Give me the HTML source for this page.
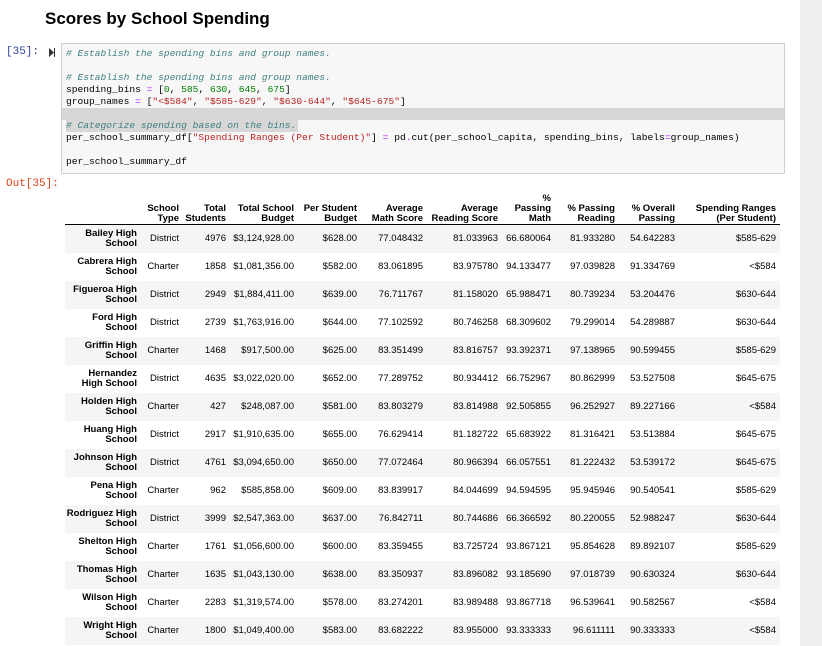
<!DOCTYPE html>
<html><head><meta charset="utf-8"><style>
body{margin:0;width:822px;height:646px;overflow:hidden;background:#fff;font-family:"Liberation Sans",Arial,sans-serif;position:relative}
.side{position:absolute;left:800px;top:0;width:22px;height:646px;background:#eeeeee}
h1{position:absolute;left:45px;top:9px;margin:0;font-size:17px;font-weight:bold;color:#000}
.pr{position:absolute;left:6px;top:46px;font:11px "Liberation Mono",monospace;color:#303F9F}
.out{position:absolute;left:6px;top:178px;font:11px "Liberation Mono",monospace;color:#D84315}
.run{position:absolute;left:49px;top:48px;width:6px;height:9px}
.code{position:absolute;left:61px;top:43px;width:722px;height:129px;background:#f7f7f7;border:1px solid #cfcfcf;overflow:hidden}
.ln{position:absolute;left:4px;font:9.6px/12px "Liberation Mono",monospace;white-space:pre;color:#000}
.c{color:#408080;font-style:italic}.n{color:#008000}.s{color:#BA2121}.o{color:#AA22FF}
table{position:absolute;left:65px;top:190px;border-collapse:collapse;font-size:9.5px;color:#000;table-layout:fixed}
th{font-weight:bold;text-align:right;padding:0 4px 0 0;vertical-align:bottom;line-height:10px;height:34px;border-bottom:1px solid #000}
td{text-align:right;padding:0 4px 0 0;height:28px;line-height:10px;white-space:nowrap}
td.i{font-weight:bold;white-space:normal}
tr.g td{background:#f5f5f5}
</style></head><body>
<div class="side"></div>
<h1>Scores by School Spending</h1>
<div class="pr">[35]:</div>
<svg class="run" viewBox="0 0 6 9"><path d="M0 0L5 4.5L0 9Z" fill="#333"/><rect x="5" y="0" width="1.2" height="9" fill="#333"/></svg>
<div class="code">
<div style="position:absolute;left:0;top:64px;width:722px;height:12px;background:#d7d7d7"></div>
<div style="position:absolute;left:4px;top:76px;width:232px;height:12px;background:#d7d7d7"></div>
<div class="ln c" style="top:4px"># Establish the spending bins and group names.</div>
<div class="ln c" style="top:28px"># Establish the spending bins and group names.</div>
<div class="ln" style="top:40px">spending_bins <span class="o">=</span> [<span class="n">0</span>, <span class="n">585</span>, <span class="n">630</span>, <span class="n">645</span>, <span class="n">675</span>]</div>
<div class="ln" style="top:52px">group_names <span class="o">=</span> [<span class="s">"&lt;$584"</span>, <span class="s">"$585-629"</span>, <span class="s">"$630-644"</span>, <span class="s">"$645-675"</span>]</div>
<div class="ln c" style="top:76px"># Categorize spending based on the bins.</div>
<div class="ln" style="top:88px">per_school_summary_df[<span class="s">"Spending Ranges (Per Student)"</span>] <span class="o">=</span> pd<span class="o">.</span>cut(per_school_capita, spending_bins, labels<span class="o">=</span>group_names)</div>
<div class="ln" style="top:112px">per_school_summary_df</div>
</div>
<div class="out">Out[35]:</div>
<table>
<colgroup><col style="width:76px"><col style="width:42px"><col style="width:47px"><col style="width:68px"><col style="width:63px"><col style="width:66px"><col style="width:75px"><col style="width:53px"><col style="width:64px"><col style="width:60px"><col style="width:101px"></colgroup>
<tr><th></th><th>School<br>Type</th><th>Total<br>Students</th><th>Total School<br>Budget</th><th>Per Student<br>Budget</th><th>Average<br>Math Score</th><th>Average<br>Reading Score</th><th>%<br>Passing<br>Math</th><th>% Passing<br>Reading</th><th>% Overall<br>Passing</th><th>Spending Ranges<br>(Per Student)</th></tr>
<tr class="g"><td class="i">Bailey High<br>School</td><td>District</td><td>4976</td><td>$3,124,928.00</td><td>$628.00</td><td>77.048432</td><td>81.033963</td><td>66.680064</td><td>81.933280</td><td>54.642283</td><td>$585-629</td></tr>
<tr><td class="i">Cabrera High<br>School</td><td>Charter</td><td>1858</td><td>$1,081,356.00</td><td>$582.00</td><td>83.061895</td><td>83.975780</td><td>94.133477</td><td>97.039828</td><td>91.334769</td><td>&lt;$584</td></tr>
<tr class="g"><td class="i">Figueroa High<br>School</td><td>District</td><td>2949</td><td>$1,884,411.00</td><td>$639.00</td><td>76.711767</td><td>81.158020</td><td>65.988471</td><td>80.739234</td><td>53.204476</td><td>$630-644</td></tr>
<tr><td class="i">Ford High<br>School</td><td>District</td><td>2739</td><td>$1,763,916.00</td><td>$644.00</td><td>77.102592</td><td>80.746258</td><td>68.309602</td><td>79.299014</td><td>54.289887</td><td>$630-644</td></tr>
<tr class="g"><td class="i">Griffin High<br>School</td><td>Charter</td><td>1468</td><td>$917,500.00</td><td>$625.00</td><td>83.351499</td><td>83.816757</td><td>93.392371</td><td>97.138965</td><td>90.599455</td><td>$585-629</td></tr>
<tr><td class="i">Hernandez<br>High School</td><td>District</td><td>4635</td><td>$3,022,020.00</td><td>$652.00</td><td>77.289752</td><td>80.934412</td><td>66.752967</td><td>80.862999</td><td>53.527508</td><td>$645-675</td></tr>
<tr class="g"><td class="i">Holden High<br>School</td><td>Charter</td><td>427</td><td>$248,087.00</td><td>$581.00</td><td>83.803279</td><td>83.814988</td><td>92.505855</td><td>96.252927</td><td>89.227166</td><td>&lt;$584</td></tr>
<tr><td class="i">Huang High<br>School</td><td>District</td><td>2917</td><td>$1,910,635.00</td><td>$655.00</td><td>76.629414</td><td>81.182722</td><td>65.683922</td><td>81.316421</td><td>53.513884</td><td>$645-675</td></tr>
<tr class="g"><td class="i">Johnson High<br>School</td><td>District</td><td>4761</td><td>$3,094,650.00</td><td>$650.00</td><td>77.072464</td><td>80.966394</td><td>66.057551</td><td>81.222432</td><td>53.539172</td><td>$645-675</td></tr>
<tr><td class="i">Pena High<br>School</td><td>Charter</td><td>962</td><td>$585,858.00</td><td>$609.00</td><td>83.839917</td><td>84.044699</td><td>94.594595</td><td>95.945946</td><td>90.540541</td><td>$585-629</td></tr>
<tr class="g"><td class="i">Rodriguez High<br>School</td><td>District</td><td>3999</td><td>$2,547,363.00</td><td>$637.00</td><td>76.842711</td><td>80.744686</td><td>66.366592</td><td>80.220055</td><td>52.988247</td><td>$630-644</td></tr>
<tr><td class="i">Shelton High<br>School</td><td>Charter</td><td>1761</td><td>$1,056,600.00</td><td>$600.00</td><td>83.359455</td><td>83.725724</td><td>93.867121</td><td>95.854628</td><td>89.892107</td><td>$585-629</td></tr>
<tr class="g"><td class="i">Thomas High<br>School</td><td>Charter</td><td>1635</td><td>$1,043,130.00</td><td>$638.00</td><td>83.350937</td><td>83.896082</td><td>93.185690</td><td>97.018739</td><td>90.630324</td><td>$630-644</td></tr>
<tr><td class="i">Wilson High<br>School</td><td>Charter</td><td>2283</td><td>$1,319,574.00</td><td>$578.00</td><td>83.274201</td><td>83.989488</td><td>93.867718</td><td>96.539641</td><td>90.582567</td><td>&lt;$584</td></tr>
<tr class="g"><td class="i">Wright High<br>School</td><td>Charter</td><td>1800</td><td>$1,049,400.00</td><td>$583.00</td><td>83.682222</td><td>83.955000</td><td>93.333333</td><td>96.611111</td><td>90.333333</td><td>&lt;$584</td></tr>
</table>
</body></html>
